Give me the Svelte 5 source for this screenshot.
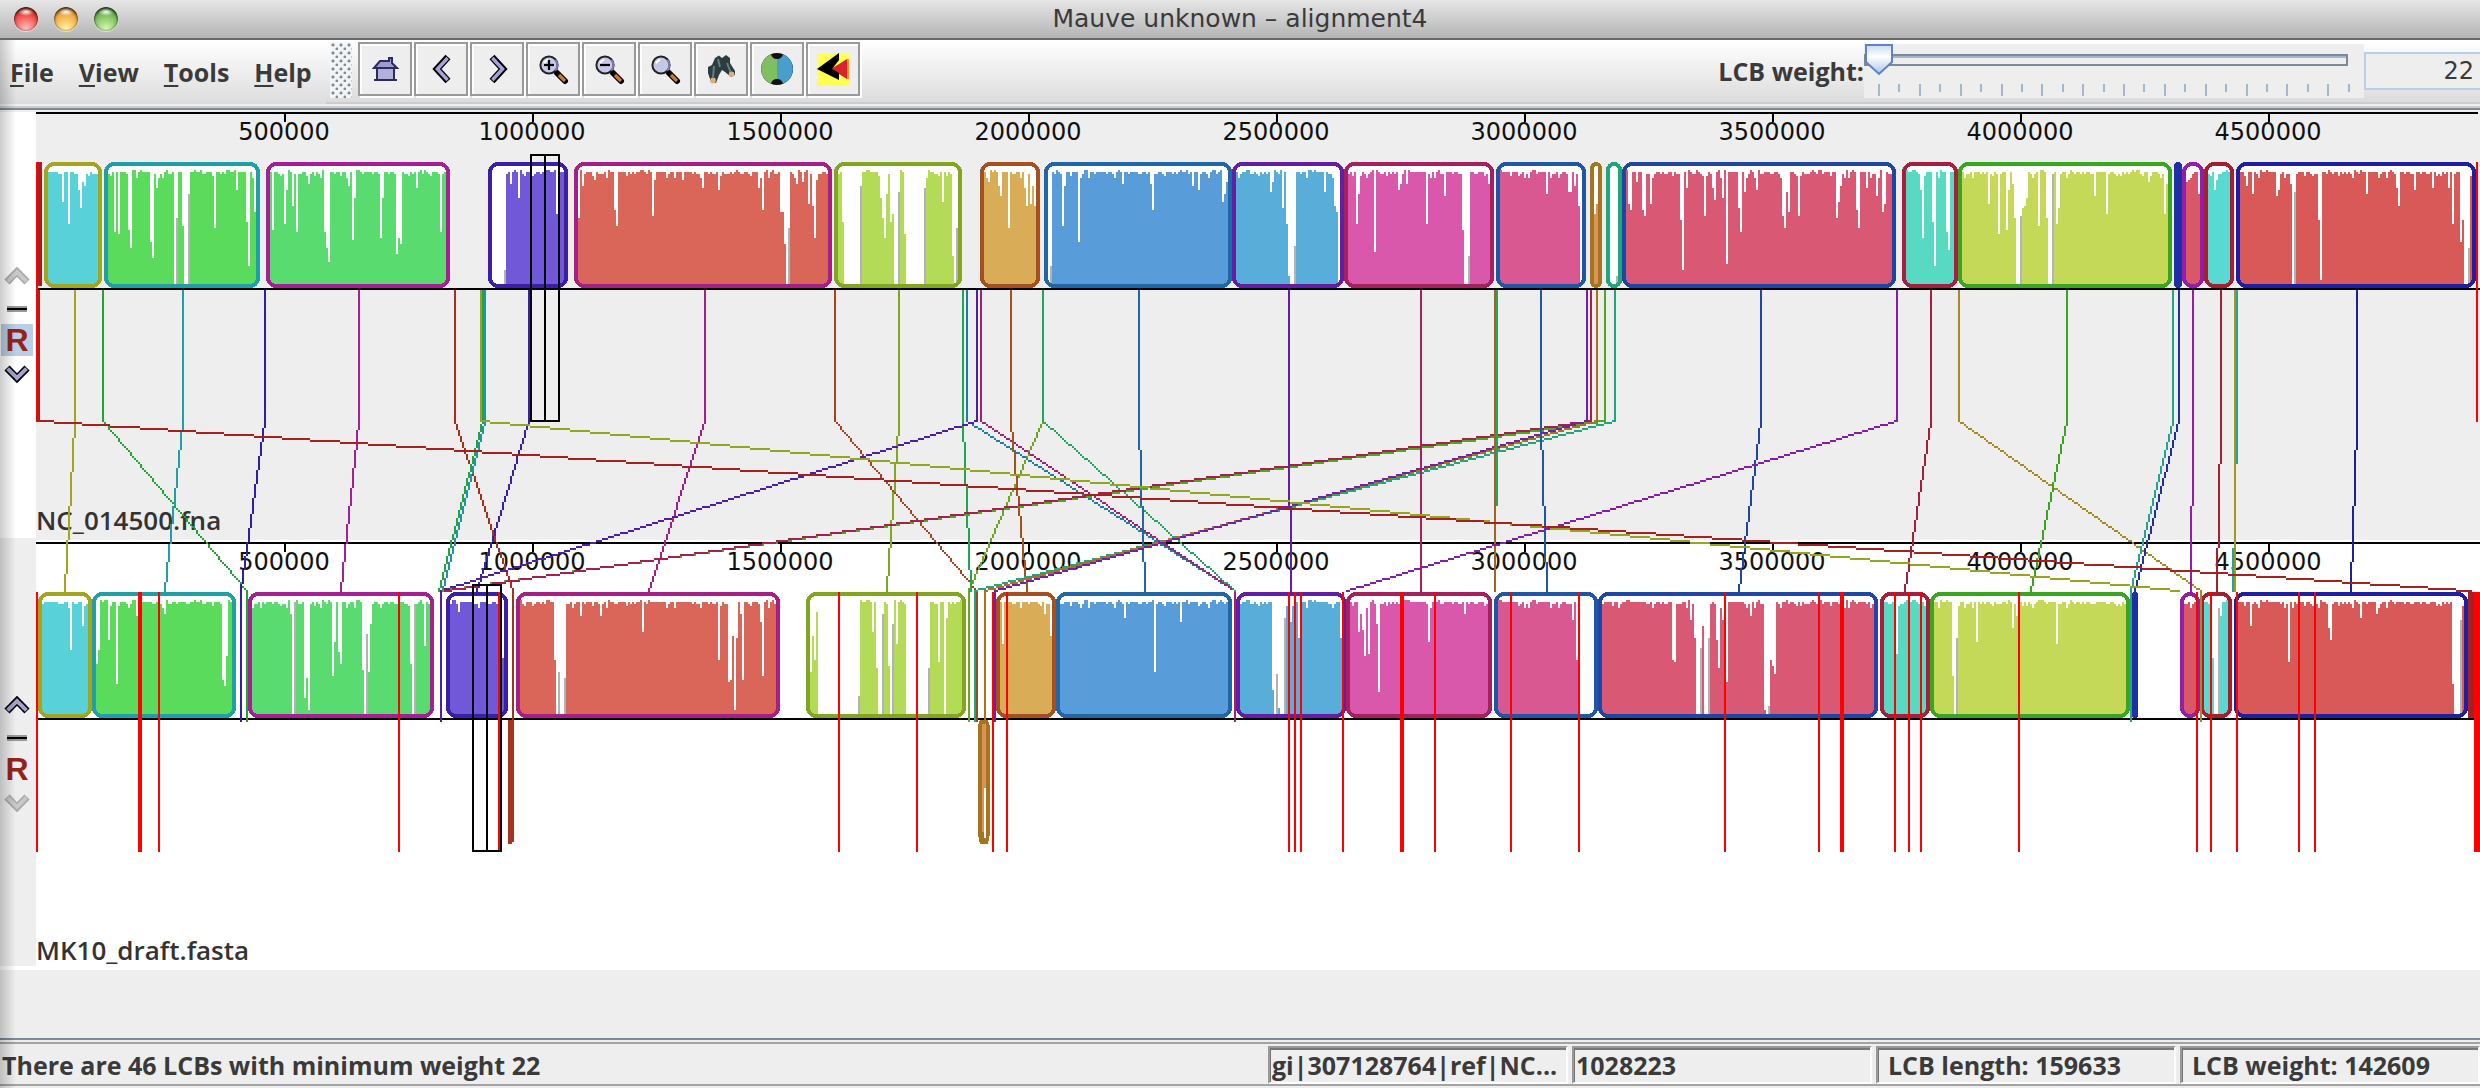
<script>
  // One chart unit is one genome-viewer pixel; both genomes share the x scale.
  const AXIS = [142, 266, 390, 514, 638, 762, 886, 1010, 1134].map((x, i) => ({ x, label: String((i + 1) * 500000) }));

  // Column notation: "x:y" similarity top at x, "a-b" empty columns, "gx:y" unaligned (grey) column.
  const upper = [
    [22, 51, '#a2a61f', '#58d1d9', '31:101 34:112 39:95 40:104 41:91 42:93'],
    [52, 130, '#209fa6', '#5adb5c', '57:116 59:117 64:115 65:124 75:121 76:129 78:94 87-88 g88:109 91:113 92-94 g94:97 107:114 118:95 123:111 124:133 127:106'],
    [133, 225, '#a61f94', '#5adb6f', '136:115 142:112 143:95 146:103 148:116 154:92 162:116 163:124 164:131 174:93 176:120 177:99 190:119 191:99 198:127 199:119 200:122 208:94 220:116'],
    [244, 284, '#3c1fa6', '#7158d9', '245-252 g252:135 255:92 259:99 278:107'],
    [287, 416, '#a61f84', '#d96658', '289:109 291:93 297:90 307:105 308:113 326:108 327:90 341:90 351:94 359:95 379:94 381:105 390:106 391:106 392:122 393-394 g394:114 398:92 401:91 404:102 406:103 407:119 408:90'],
    [417, 481, '#82a61f', '#b4db58', '421:111 422-430 g430:93 440:99 441:109 442:119 443:97 445:111 446:107 447-449 g449:96 452:117 453-462 g462:94 471:101 476:128 477-480 g478:114'],
    [490, 520, '#a6501f', '#d9ac58', '494:91 499:93 500:98 504:114 512:94 513:103 515:102 516:93 517:103'],
    [522, 616, '#1f67a6', '#589cd9', '524-525 g525:133 531:113 532:93 539:121 561:92 575:92 576:105 596:93 599:95 611:101 612:97 613:91'],
    [616, 672, '#621fa6', '#58add9', '635:96 636:91 641:104 643:112 644:138 645-647 g647:123 662:96 667:103 668:106 669-670'],
    [672, 747, '#a61f5e', '#d958ab', '678:112 679:97 687:126 699:95 700:92 703:92 713:112 722:98 731:115 732-734 g734:128 744:92'],
    [748, 793, '#1f57a6', '#d95892', '773:97 784:96 785:96 787:93 789:103 790-791'],
    [795, 801, '#a6731f', '#d99258', '797:107 798:102 799:102'],
    [803, 811, '#1fa67b', '#58d9a8', '804-809 g808:138'],
    [811, 948, '#1f45a6', '#d95873', '814:102 815:105 818:91 821:105 822:108 825:102 840:110 841:135 843:94 852:108 856:94 857:100 861:99 863:132 869:104 870:116 872:96 878:95 891:108 892:114 893:96 894:106 899:108 918:109 919:101 920:93 928:105 929:114 933:94 938:98 941:106 942:102'],
    [951, 979, '#a61f3f', '#58d9c1', '960:95 961:119 966:111 967:133 973:116 974:125'],
    [979, 1086, '#3aa61f', '#c5d958', '994:102 999:117 1003:115 1004:95 1006:92 1007:109 1008-1010 g1010:108 1011:104 1012:103 1013:99 1019:113 1023:109 1024-1026 g1026:87 1028:112 1029:104 1047:98 1053:107 1074:91 1082:107 1083:92'],
    [1087, 1091, '#1f30a6', '#1f30a6', ''],
    [1091, 1102, '#941fa6', '#d95868', '1093:91 1094:90 1099:97'],
    [1102, 1117, '#a61f2f', '#58d9d1', '1107:95 1108:90'],
    [1118, 1238, '#1f1fa6', '#d95858', '1123:93 1126:97 1138:98 1139:95 1145:92 1146-1147 g1147:96 1159:110 1160:140 1183:97 1198:94 1199:103 1207:95 1216:94 1224:94 1226:112 1230:121 1231:110 1232-1234 g1234:124']
  ];
  const lower = [
    [19, 46, '#a2a61f', '#58d1d9', '35:325 41:313 42:303'],
    [46, 118, '#209fa6', '#5adb5c', '48:332 49:325 54:320 58:342 68:308 82:307 111:340 112:343 113:328'],
    [124, 217, '#a61f94', '#5adb6f', '145:307 146-147 g147:301 152:349 153:339 154:355 166:338 167:321 169:326 170:332 181:335 182-183 g183:317 184:336 185:312 205:332 206-207 g207:302 212:323'],
    [223, 254, '#3c1fa6', '#7158d9', '229:306 250-250 251:329'],
    [258, 390, '#a61f84', '#d96658', '277:330 278-282 g279:336 g282:339 290:308 300:308 321:316 359:330 364:341 365:340 366:318 367:355 368:319 370:307 371:340 380:311 381:338'],
    [403, 483, '#82a61f', '#b4db58', '405:336 406:318 407:330 408:306 409-429 g429:348 436:316 438:334 439-441 g441:307 444:333 445-446 g446:312 448:322 453-464 g464:334 469:331 472-472 473:309'],
    [498, 528, '#a6501f', '#d9ac58', '501:322 522:307 525:318'],
    [528, 616, '#1f67a6', '#589cd9', '562:309 577:336 590:311'],
    [618, 673, '#621fa6', '#58add9', '636:345 637-638 g638:337 639:354 640-642 g642:309 643:303 645:311 649:319 670:319'],
    [673, 746, '#a61f5e', '#d958ab', '679:316 680:307 681:315 682:328 684:327 688:312 689:346 714:321 732:307'],
    [747, 799, '#1f57a6', '#d95892', '786:310 788:330 789-798'],
    [799, 939, '#1f45a6', '#d95873', '836:330 837:331 845:310 847:319 848-850 g850:324 851:313 852-854 g854:319 858:320 859:334 861:310 863:341 875:308 882:355 883-884 g884:353 885:330 886:333 887:337'],
    [940, 965, '#a61f3f', '#58d9c1', '948:327'],
    [965, 1065, '#3aa61f', '#c5d958', '976:338 977-978 g978:319 988:321 1006:314 1008:308 1028:322'],
    [1066, 1069, '#1f30a6', '#1f30a6', ''],
    [1090, 1100, '#941fa6', '#d95868', ''],
    [1100, 1116, '#a61f2f', '#58d9d1', '1106:329 1107-1109 g1109:304 1110:308'],
    [1117, 1234, '#1f1fa6', '#d95858', '1125:313 1144:331 1164:314 1165:320 1180:309 1188:307 1226:342 1227-1230 g1230:310']
  ];

  const links = [
    [37, 32, '#a2a61f'], [51, 123, '#1fa630'], [91, 82, '#209fa6'], [132, 120, '#2e1fa6'],
    [179, 170, '#a61f94'], [227, 256, '#a6301f'], [241, 219, '#1fa640'], [242, 221, '#1f94a6'],
    [264, 238, '#3c1fa6'], [352, 324, '#a61f84'], [417, 488, '#a6431f'], [449, 443, '#82a61f'],
    [521, 484, '#6ca61f'], [481, 485, '#1fa653'], [483, 617, '#1f7ca6'], [488, 220, '#4e1fa6'],
    [490, 617, '#a61f73'], [505, 513, '#a6501f'], [521, 617, '#1fa65f'], [569, 572, '#1f67a6'],
    [802, 221, '#4fa61f'], [795, 222, '#a61f4f'], [807, 487, '#1fa67b'], [798, 492, '#a6731f'],
    [793, 497, '#731fa6'], [644, 645, '#621fa6'], [710, 710, '#a61f5e'], [748, 747, '#1fa667'],
    [747, 747, '#a6631f'], [770, 773, '#1f57a6'], [880, 869, '#1f45a6'], [948, 673, '#831fa6'],
    [965, 952, '#a61f3f'], [979, 1100, '#a6891f'], [1033, 1015, '#3aa61f'], [1086, 1065, '#1fa68c'],
    [1089, 1067, '#1f30a6'], [1096, 1095, '#941fa6'], [1110, 1108, '#a61f2f'], [1118, 1116, '#1fa69b'],
    [1117, 1117, '#a6981f'], [1178, 1175, '#1f1fa6'], [240, 1089, '#94a61f'], [19, 1235, '#a62020']
  ];

  // Blocks too short to show a box in the lower genome: a bare column.
  const slivers = [
    [120, '#2e1fa6'], [123, '#1fa630'], [220, '#4e1fa6'], [256, '#a6301f'], [484, '#6ca61f'],
    [487, '#1fa67b'], [488, '#a6431f'], [492, '#a6731f'], [497, '#731fa6'], [617, '#a61f73'],
    [1065, '#1fa68c'], [1100, '#a6891f']
  ];

  const contigs = [
    [18, 1], [69, 2], [79, 1], [199, 1], [249, 1], [419, 1], [458, 1], [496, 1], [503, 1],
    [644, 1], [647, 1], [650, 1], [671, 1], [700, 2], [717, 1], [755, 1], [789, 1], [862, 1],
    [909, 1], [920, 2], [947, 1], [954, 1], [960, 1], [1009, 1], [1098, 1], [1105, 1],
    [1118, 1], [1149, 1], [1157, 1], [1237, 3]
  ];

  const JITTER = [1, 1, 1, 2, 1, 0, 1, 2, 2, 1, 3, 1, 1, 2, 0, 1, 4, 1, 2];

  function profile([x0, x1, , , spec], base) {
    const top = base - 57;
    const cols = new Map();
    for (let x = x0 + 2; x < x1 - 1; x++) {
      const h = ((x * 2654435761) >>> 0) % 9973;
      cols.set(x, top + JITTER[(h + (x >> 2)) % JITTER.length]);
    }
    let grey = '';
    for (const token of spec.split(' ').filter(Boolean)) {
      if (token[0] === 'g') {
        const [x, y] = token.slice(1).split(':').map(Number);
        grey += `M${x} ${y}h1V${base}h-1z`;
      } else if (token.includes('-')) {
        const [a, b] = token.split('-').map(Number);
        for (let x = a; x <= b; x++) cols.delete(x);
      } else {
        const [x, y] = token.split(':').map(Number);
        cols.set(x, y);
      }
    }
    let bars = '';
    for (const [x, y] of cols) bars += `M${x} ${y}h1V${base}h-1z`;
    return { bars, grey };
  }

  function build(list, base) {
    return list.map((b) => ({
      x: b[0], w: b[1] - b[0], y: base - 61, stroke: b[2], fill: b[3], ...profile(b, base)
    }));
  }

  // Unsmoothed line, drawn as whole-unit cells.
  function cells(x0, y0, x1, y1) {
    let d = '';
    const dx = x1 - x0;
    const dy = y1 - y0;
    if (Math.abs(dx) > dy) {
      let start = 0;
      const s = Math.sign(dx);
      let y = y0;
      for (let i = 1; i <= Math.abs(dx) + 1; i++) {
        const ny = Math.round(y0 + (dy * i) / Math.abs(dx));
        if (ny !== y || i === Math.abs(dx) + 1) {
          const a = x0 + s * start;
          const b = x0 + s * (i - 1);
          d += `M${Math.min(a, b)} ${y}h${Math.abs(b - a) + 1}v1H${Math.min(a, b)}z`;
          start = i;
          y = ny;
        }
      }
    } else {
      let start = y0;
      let x = x0;
      for (let y = y0 + 1; y <= y1 + 1; y++) {
        const nx = Math.round(x0 + (dx * (y - y0)) / dy);
        if (nx !== x || y === y1 + 1) {
          d += `M${x} ${start}h1V${y}h-1z`;
          start = y;
          x = nx;
        }
      }
    }
    return d;
  }

  const upperBlocks = build(upper, 142);
  const lowerBlocks = build(lower, 357);
  const paths = links.map(([a, b, color]) => ({ color, d: `M${a} 145h1V210h-1z` + cells(a, 210, b, 295) }));

  const menus = ['File', 'View', 'Tools', 'Help'];
  const tools = ['Home', 'Scroll left', 'Scroll right', 'Zoom in', 'Zoom out', 'Zoom', 'Find', 'Color scheme', 'Next LCB'];
  const genomes = [
    { name: 'NC_014500.fna', reference: true },
    { name: 'MK10_draft.fasta', reference: false }
  ];
  let weight = $state(22);
</script>

{#snippet lens(sign)}
  <path d="M10 10l4 4" stroke="#000" stroke-width="3" stroke-linecap="round" />
  <path d="M11 11l3 3" stroke="#c77a35" stroke-width="1.6" />
  <circle cx="6" cy="6" r="4.3" fill="#c6c6e6" stroke="#222" stroke-width="1" />
  <path d="M9.2 3.4a4.2 4.2 0 0 1 0 5.4" fill="none" stroke="#7a7ab8" stroke-width="1" />
  <path d="M3.6 5.2a3 3 0 0 1 2-1.9" fill="none" stroke="#fff" stroke-width="1" />
  {#if sign !== ''}<path d="M3.5 6h5" stroke="#000" stroke-width="1.1" />{/if}
  {#if sign === '+'}<path d="M6 3.5v5" stroke="#000" stroke-width="1.1" />{/if}
{/snippet}

{#snippet arrow(up, on)}
  <svg class="arrow" viewBox="0 0 13 9" aria-hidden="true">
    <g transform={up ? '' : 'rotate(180 6.5 4.5)'} fill="none">
      <path d="M1.5 7.500L6.500 2.400l5 5.100" stroke={on ? '#000' : '#a8a8a8'} stroke-width="3.6" />
      <path d="M1.800 7.200L6.500 2.500l4.700 4.700" stroke={on ? '#a3a3d2' : '#c9c9c9'} stroke-width="2" />
    </g>
  </svg>
{/snippet}

{#snippet block(b)}
  <rect x={b.x + 1} y={b.y + 1} width={b.w - 2} height="61" rx={Math.min(5, (b.w - 2) / 2)} fill="#fff" />
  <path d={b.bars} fill={b.fill} />
  <path d={b.grey} fill="#b3b3b3" />
  <rect x={b.x + 1} y={b.y + 1} width={b.w - 2} height="61" rx={Math.min(4, (b.w - 2) / 2)} fill="none" stroke={b.stroke} stroke-width="2" />
{/snippet}

<div class="window">
  <header class="titlebar">
    <div class="lights">
      <button class="light red" aria-label="Close"></button>
      <button class="light amber" aria-label="Minimize"></button>
      <button class="light green" aria-label="Zoom window"></button>
    </div>
    <h1>Mauve unknown – alignment4</h1>
  </header>

  <div class="bars">
    <nav class="menubar">
      {#each menus as m}
        <button class="menu"><span class="key">{m[0]}</span>{m.slice(1)}</button>
      {/each}
    </nav>
    <div class="toolbar">
      <span class="grip"></span>
      <div class="tools">
        {#each tools as t, i}
          <button class="tool" aria-label={t}>
            <svg viewBox="0 0 16 16" aria-hidden="true">
              {#if i === 0}
                <path d="M2.500 7.500L5.500 4H10V2.500h1.500V5L14 7.500z" fill="#9c9cce" stroke="#2b2b5e" stroke-width="1" />
                <path d="M4 7.500h8.500v6H4z" fill="#b1b1dc" stroke="#2b2b5e" stroke-width="1" />
                <path d="M2.500 13.500h11.500" stroke="#2b2b5e" stroke-width="1" />
              {:else if i === 1}
                <path d="M11.5 2L6 8l5.500 6" fill="none" stroke="#000" stroke-width="3.4" />
                <path d="M11.300 2.500L6.200 8l5.100 5.500" fill="none" stroke="#a3a3d8" stroke-width="1.700" />
              {:else if i === 2}
                <path d="M5.500 2L11 8l-5.500 6" fill="none" stroke="#000" stroke-width="3.4" />
                <path d="M5.700 2.500L10.800 8l-5.100 5.500" fill="none" stroke="#a3a3d8" stroke-width="1.700" />
              {:else if i === 3}
                {@render lens('+')}
              {:else if i === 4}
                {@render lens('-')}
              {:else if i === 5}
                {@render lens('')}
              {:else if i === 6}
                <path d="M5 2.500L7 1.200 8.500 2.500 10.500 1l2 1.500v2.500L15 9v2l-2 1-3-2.500-1.500-1L7 11l-1.500 4-2.500-.5L1.500 10V7l2-1z" fill="#2c3d42" />
                <path d="M4.500 6.500L4 12M6.500 3l1 4M11 5l2 5" fill="none" stroke="#647f84" stroke-width="1" />
                <ellipse cx="4" cy="13.800" rx="1.400" ry="1.500" fill="#dcae80" />
                <ellipse cx="13.300" cy="10.600" rx="1.400" ry="1.300" fill="#dcae80" />
              {:else if i === 7}
                <circle cx="8" cy="8" r="8" fill="#111" />
                <path d="M5 .6Q5.500 3 8 3v10q-2.500 0-3 2.400A8 8 0 0 1 5 .6z" fill="#7fbf62" />
                <path d="M11 .6Q10.500 3 8 3v10q2.500 0 3 2.400A8 8 0 0 0 11 .6z" fill="#4b9dcb" />
              {:else}
                <path d="M0 0h16v16H0z" fill="#ffff54" />
                <path d="M15 3v10L7 8z" fill="#d8232a" />
                <path d="M15 3h1v10h-1z" fill="#f0902d" />
                <path d="M0 8l11-8v3.500L7.500 8l3.500 2v3.500z" fill="#000" />
              {/if}
            </svg>
          </button>
        {/each}
      </div>
      <div class="weight">
        <label for="lcb">LCB weight:</label>
        <div class="slider">
          <input id="lcb" type="range" min="22" max="500" bind:value={weight} />
          <div class="ticks">
            {#each Array(24) as _, i}<span class:minor={i % 2 === 1}></span>{/each}
          </div>
        </div>
        <input class="value" type="text" aria-label="LCB weight value" value={weight} />
      </div>
    </div>
  </div>

  <main class="viewer">
    <aside class="rails">
      {#each genomes as g}
        <div class="rail" class:reference={g.reference}>
          <button aria-label="Move {g.name} up">{@render arrow(true, !g.reference)}</button>
          <button class="dash" aria-label="Hide {g.name}"><span></span></button>
          <button class="ref" class:active={g.reference} aria-label="Make {g.name} the reference">R</button>
          <button aria-label="Move {g.name} down">{@render arrow(false, g.reference)}</button>
        </div>
      {/each}
    </aside>

    <svg class="chart" viewBox="18 56 1222 429" role="img" aria-label="Genome alignment">
      <rect x="18" y="56" width="1222" height="214" fill="#eee" />
      <rect x="18" y="270" width="1222" height="215" fill="#fff" />
      <path d="M18 56h1221v1H18zM18 144h1222v1H18zM18 271h1222v1H18zM18 359h1222v1H18z" />
      {#each AXIS as a}
        <path d="M{a.x} 57h1v4h-1zM{a.x} 272h1v4h-1z" />
        <text class="tick" x={a.x} y="70">{a.label}</text>
        <text class="tick" x={a.x} y="285">{a.label}</text>
      {/each}
      <text class="name" x="18" y="265">{genomes[0].name}</text>
      <text class="name" x="18" y="480">{genomes[1].name}</text>

      {#each upperBlocks as b}{@render block(b)}{/each}
      <path d="M19 81h2v62h-2zM1234 296h3v63h-3z" fill="#a62020" />
      {#each lowerBlocks as b}{@render block(b)}{/each}
      <path d="M254 360h3v61h-1v1h-2z" fill="#a63220" />
      <path d="M489 363l1-3h4l1 3v54l-1 5h-4l-1-5z" fill="#a6731f" />
      <path d="M491 362h2v54h-2z" fill="#d99258" />
      <path d="M492 394h1v25h-1z" fill="#fff" />

      {#each paths as p}<path d={p.d} fill={p.color} />{/each}
      {#each slivers as [x, color]}<path d="M{x} 296h1v65h-1z" fill={color} />{/each}
      <path d="M18 81h1v130h-1zM1238 81h1v130h-1z" fill="#f00" />
      {#each contigs as [x, w]}<rect {x} y="296" width={w} height="130" fill="#f00" />{/each}
      <path d="M265 77h15v134h-15zM266 78v132h6V78zM273 78v132h6V78zM236 292h15v134h-15zM237 293v132h6V293zM244 293v132h6V293z" fill-rule="evenodd" />
    </svg>
  </main>

  <div class="rest"></div>

  <footer class="status">
    <p>There are 46 LCBs with minimum weight 22</p>
    <output class="cell">gi|307128764|ref|NC...</output>
    <output class="cell">1028223</output>
    <output class="cell wide">LCB length: 159633</output>
    <output class="cell wide">LCB weight: 142609</output>
  </footer>
</div>

<style>
  :global(body) {
    margin: 0;
    background: #eee;
  }
  .window {
    position: relative;
    display: flex;
    flex-direction: column;
    min-height: 100vh;
    font-family: 'Open Sans', 'Noto Sans', sans-serif;
    font-size: 25px;
    font-weight: 700;
    color: #3a3a3a;
    background: #eee;
  }
  .window::after {
    content: '';
    position: absolute;
    inset: 40px auto 0 0;
    width: 16px;
    background: linear-gradient(90deg, rgba(0, 0, 0, 0.2), rgba(0, 0, 0, 0));
    pointer-events: none;
  }
  button,
  input {
    margin: 0;
    padding: 0;
    border: 0;
    background: none;
    font: inherit;
    color: inherit;
  }
  .titlebar {
    display: grid;
    grid-template-columns: 1fr auto 1fr;
    align-items: center;
    height: 38px;
    border-bottom: 2px solid #686868;
    background: linear-gradient(#e6e6e6, #b4b4b4);
  }
  .lights {
    display: flex;
    gap: 16px;
    padding-left: 14px;
  }
  .light {
    width: 24px;
    height: 24px;
    border-radius: 50%;
    box-shadow: 0 1px 1px rgba(255, 255, 255, 0.6), inset 0 2px 3px rgba(0, 0, 0, 0.6), inset 0 0 2px rgba(0, 0, 0, 0.6);
  }
  .red {
    background: radial-gradient(ellipse 8px 4px at 50% 20%, #fff, transparent), radial-gradient(circle at 50% 90%, #ffc0c0, #f0453f 60%, #8c2020);
  }
  .amber {
    background: radial-gradient(ellipse 8px 4px at 50% 20%, #fff, transparent), radial-gradient(circle at 50% 90%, #fff3a0, #f0a840 60%, #8f5a18);
  }
  .green {
    background: radial-gradient(ellipse 8px 4px at 50% 20%, #fff, transparent), radial-gradient(circle at 50% 90%, #d4f7b0, #76bb58 60%, #2f6a24);
  }
  h1 {
    margin: 0;
    font-family: 'DejaVu Sans', sans-serif;
    font-size: 25px;
    font-weight: 400;
    line-height: 36px;
    color: #3a3a3a;
  }
  .bars {
    display: flex;
    height: 68px;
    border-bottom: 2px solid #7a8a99;
    box-shadow: inset 0 -2px #ccc;
    margin-bottom: 2px;
  }
  .menubar {
    display: flex;
    align-items: center;
    gap: 25px;
    width: 316px;
    height: 64px;
    padding-left: 10px;
    background: linear-gradient(#fff, #dcdcdc);
  }
  .menu {
    line-height: 34px;
  }
  .key {
    text-decoration: underline;
    text-decoration-thickness: 2px;
    text-underline-offset: 3px;
  }
  .toolbar {
    display: flex;
    flex: 1;
    height: 62px;
    border-bottom: 2px solid #ccc;
    box-sizing: content-box;
    background: linear-gradient(#fff, #dcdcdc);
  }
  .grip {
    width: 22px;
    height: 56px;
    margin: 2px 6px 0 4px;
    background:
      radial-gradient(circle at 3px 3px, #7a8a99 1px, transparent 2px) 0 0 / 8px 8px,
      radial-gradient(circle at 7px 7px, #7a8a99 1px, transparent 2px) 0 0 / 8px 8px,
      #f4f4f4;
  }
  .tools {
    display: flex;
    gap: 2px;
    padding-top: 2px;
  }
  .tool {
    display: grid;
    place-items: center;
    width: 54px;
    height: 54px;
    border: 2px solid #999;
    box-shadow: inset 2px 2px #fff, 2px 2px #fff;
    background: #eee;
  }
  .tool svg {
    width: 32px;
    height: 32px;
  }
  .weight {
    display: flex;
    align-items: center;
    margin-left: auto;
  }
  .slider {
    box-sizing: border-box;
    width: 500px;
    height: 54px;
    background: #eee;
  }
  .slider input {
    display: block;
    appearance: none;
    width: 484px;
    height: 32px;
  }
  .slider input::-webkit-slider-runnable-track {
    box-sizing: border-box;
    height: 12px;
    border: 2px solid #7a8a99;
    box-shadow: inset 0 2px #a3b8cc;
    background: #eee;
  }
  .slider input::-webkit-slider-thumb {
    appearance: none;
    width: 30px;
    height: 32px;
    margin: -12px 0 0 -2px;
    background: url("data:image/svg+xml,%3Csvg xmlns='http://www.w3.org/2000/svg' viewBox='0 0 30 32'%3E%3ClinearGradient id='g' x2='0' y2='1'%3E%3Cstop stop-color='%23c8daf2'/%3E%3Cstop offset='.4' stop-color='%23fff'/%3E%3Cstop offset='1' stop-color='%23a9c4ea'/%3E%3C/linearGradient%3E%3Cpath d='M2 1h26v17L15 30 2 18z' fill='url(%23g)' stroke='%236382bf' stroke-width='2'/%3E%3C/svg%3E") no-repeat;
  }
  .ticks {
    display: flex;
    justify-content: space-between;
    margin: 8px 14px 0;
  }
  .ticks span {
    width: 2px;
    height: 12px;
    background: #a3b8cc;
  }
  .ticks .minor {
    height: 8px;
  }
  .value {
    box-sizing: border-box;
    width: 116px;
    height: 38px;
    padding-right: 6px;
    border: 2px solid #b8cfe5;
    border-right: 0;
    background: #eee;
    font-family: 'DejaVu Sans', sans-serif;
    font-size: 24px;
    font-weight: 400;
    text-align: right;
  }
  .viewer {
    display: flex;
  }
  .rails {
    display: grid;
    grid-template-rows: 430fr 424fr;
    width: 36px;
    flex: none;
    border-bottom: 4px solid #fff;
    box-sizing: border-box;
  }
  .rail {
    display: flex;
    flex-direction: column;
    align-items: center;
    justify-content: center;
    padding-right: 2px;
    background: #eee;
  }
  .rail.reference {
    border-bottom: 4px solid #eee;
    background: #fff;
  }
  .arrow {
    display: block;
    width: 26px;
    height: 18px;
  }
  .dash {
    padding: 21px 0 12px;
  }
  .dash span {
    display: block;
    width: 20px;
    height: 2px;
    border: 2px solid #999;
    border-width: 2px 0;
    background: #000;
  }
  .ref {
    width: 32px;
    height: 32px;
    margin-bottom: 9px;
    font-family: 'Liberation Sans', sans-serif;
    font-size: 32px;
    font-weight: 700;
    line-height: 32px;
    color: #96231a;
  }
  .ref.active {
    background: #b8cfe5;
  }
  .chart {
    display: block;
    flex: 1;
    min-width: 0;
    height: auto;
    shape-rendering: crispEdges;
  }
  .tick {
    font-family: 'DejaVu Sans', sans-serif;
    font-size: 12px;
    font-weight: 400;
    text-anchor: middle;
    fill: #111;
  }
  .name {
    font-size: 13px;
    font-weight: 600;
    fill: #333;
  }
  .rest {
    flex: 1;
    border-bottom: 2px solid #7a8a99;
  }
  .status {
    display: flex;
    gap: 4px;
    height: 38px;
    margin-top: 2px;
    border-top: 2px solid #a3a3a3;
    border-bottom: 2px solid #a3a3a3;
    margin-bottom: 2px;
    padding-top: 2px;
    line-height: 38px;
    white-space: nowrap;
  }
  .status p {
    flex: 1;
    margin: 0;
    padding-left: 2px;
  }
  .cell {
    box-sizing: border-box;
    width: 300px;
    padding-left: 2px;
    overflow: hidden;
    border: 2px solid #fff;
    border-top-color: #999;
    border-left-color: #999;
    box-shadow: inset 0 2px #777, inset 1px 0 #777;
    line-height: 34px;
  }
  .wide {
    padding-left: 10px;
  }
</style>
